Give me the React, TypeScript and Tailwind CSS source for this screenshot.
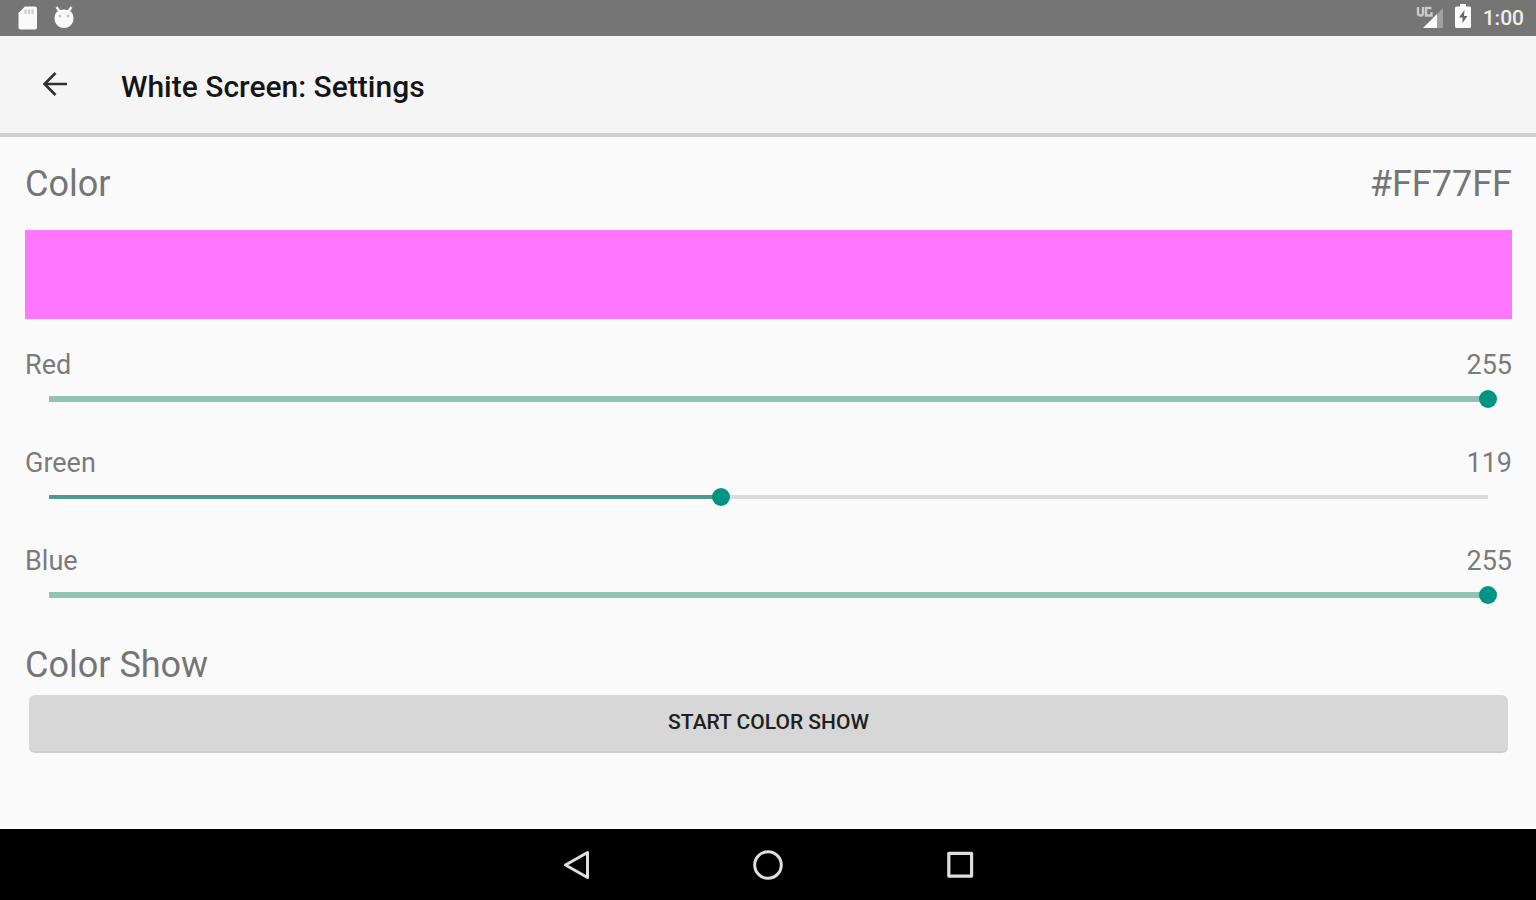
import { useState } from "react";
import clsx from "clsx";

interface ChannelProps {
  id: string;
  label: string;
  value: number;
  onChange: (value: number) => void;
}

function Channel({ id, label, value, onChange }: ChannelProps) {
  const full = value === 255;
  const percent = (value / 255) * 100;
  const fill = full ? "#93c3b5" : "#4f9a8b";

  return (
    <div>
      <div className="flex justify-between text-[27px] leading-8 text-[#7b7b7b]">
        <label htmlFor={id}>{label}</label>
        <output htmlFor={id}>{value}</output>
      </div>
      <div className="px-[15px]">
        <input
          id={id}
          type="range"
          min={0}
          max={255}
          value={value}
          onChange={(e) => onChange(Number(e.target.value))}
          className={clsx(
            "block h-9 w-full cursor-pointer appearance-none bg-center bg-no-repeat outline-none",
            "[&::-webkit-slider-thumb]:size-[18px] [&::-webkit-slider-thumb]:appearance-none [&::-webkit-slider-thumb]:rounded-full [&::-webkit-slider-thumb]:bg-[#009485]",
            full ? "bg-[length:calc(100%-18px)_6px]" : "bg-[length:calc(100%-18px)_4px]"
          )}
          style={{ backgroundImage: `linear-gradient(to right, ${fill} ${percent}%, #dadada ${percent}%)` }}
        />
      </div>
    </div>
  );
}

function StatusBar() {
  return (
    <div className="flex h-9 items-center justify-between bg-[#757575] pl-4 pr-3 text-white">
      <div className="flex items-center gap-3">
        {/* SD card */}
        <svg className="size-6" viewBox="0 0 24 24" aria-hidden="true">
          <path d="M9 .500h10a2 2 0 0 1 2 2v19a2 2 0 0 1-2 2H4.500a2 2 0 0 1-2-2V7z" fill="#fafafa" />
          <path d="M9.500 3.500v4.500M13 3.500v4.500M16.500 3.500v4.500" stroke="#cccccc" strokeWidth="2.200" />
        </svg>
        {/* Debug head */}
        <svg className="size-6" viewBox="0 0 24 24" aria-hidden="true">
          <path d="M4.500 1 8 6M19.500 1 16 6" stroke="#f2f2f2" strokeWidth="2.400" />
          <path d="M12 3.500c6 0 9.500 3 9.500 9 0 5-4 9.500-9.500 9.500s-9.500-4.500-9.500-9.500c0-6 3.500-9 9.500-9z" fill="#fafafa" />
          <circle cx="8" cy="10" r="1.500" fill="#c4c4c4" />
          <circle cx="16" cy="10" r="1.500" fill="#c4c4c4" />
        </svg>
      </div>
      <div className="flex items-center gap-3">
        {/* Signal */}
        <svg className="h-6 w-7" viewBox="0 0 28 24" aria-hidden="true">
          <path d="M28 2v20h-8V10z" fill="#a0a0a0" />
          <path d="M22 8v14H8z" fill="#fafafa" />
          <path d="M3 1v6q0 2.500 2.500 2.500T8 7V1M16.500 2H11v7.500h5.500V6" fill="none" stroke="#c9c9c9" strokeWidth="2.400" />
        </svg>
        {/* Charging battery */}
        <svg className="-mt-1 h-6 w-4" viewBox="0 0 16 24" aria-hidden="true">
          <path d="M5 0h6v2.500h3.500a1.500 1.500 0 0 1 1.500 1.500v18.500a1.500 1.500 0 0 1-1.500 1.500h-13A1.500 1.500 0 0 1 0 22.500V4a1.500 1.500 0 0 1 1.500-1.500H5z" fill="#fafafa" />
          <path d="M9.500 6 4 13.500h3.500V19L12.500 12H9z" fill="#666666" />
        </svg>
        <span className="text-[21px] font-medium leading-9 text-[#eeeeee]">1:00</span>
      </div>
    </div>
  );
}

function NavBar() {
  return (
    <nav className="grid h-[74px] grid-cols-[1fr_192px_192px_192px_1fr] items-center border-t-3 border-white bg-black text-[#dedede]">
      <button type="button" aria-label="Back" className="col-start-2 flex h-full items-center justify-center">
        <svg className="size-8" viewBox="0 0 32 32" fill="none" stroke="currentColor" strokeWidth="3" strokeLinejoin="round">
          <path d="M27.500 3.500v25L5.500 16z" />
        </svg>
      </button>
      <button type="button" aria-label="Home" className="flex h-full items-center justify-center">
        <svg className="size-8" viewBox="0 0 32 32" fill="none" stroke="currentColor" strokeWidth="3">
          <circle cx="16" cy="16" r="13.300" />
        </svg>
      </button>
      <button type="button" aria-label="Overview" className="flex h-full items-center justify-center">
        <svg className="size-8" viewBox="0 0 32 32" fill="none" stroke="currentColor" strokeWidth="3.200" strokeLinejoin="round">
          <path d="M4.800 4.300h22.800v22.800H4.800z" />
        </svg>
      </button>
    </nav>
  );
}

export default function App() {
  const [red, setRed] = useState(255);
  const [green, setGreen] = useState(119);
  const [blue, setBlue] = useState(255);

  const hex = "#" + [red, green, blue].map((c) => c.toString(16).padStart(2, "0")).join("").toUpperCase();

  return (
    <div className="flex min-h-screen flex-col bg-[#fafafa] font-[Roboto,sans-serif]">
      <StatusBar />

      <header className="flex h-[101px] items-center border-b-4 border-[#d0d0d0] bg-[#f5f5f5] pl-10">
        <button type="button" aria-label="Navigate up" className="mr-[51px]">
          <svg className="size-[30px]" viewBox="0 0 30 30" fill="none" stroke="#303030" strokeWidth="2.600">
            <path d="M27 14H5M15.500 3 4.500 14l11 11" />
          </svg>
        </button>
        <h1 className="pt-1 text-[30px] font-medium leading-9 text-[#151515]">White Screen: Settings</h1>
      </header>

      <main className="flex-1 pl-[25px] pr-6 pt-[25px]">
        <div className="flex justify-between text-4xl leading-[44px] text-[#757575]">
          <h2>Color</h2>
          <span>{hex}</span>
        </div>
        <div className="mt-6 h-[89px]" style={{ backgroundColor: hex }} />

        <div className="mt-[30px] flex flex-col gap-[30px]">
          <Channel id="red" label="Red" value={red} onChange={setRed} />
          <Channel id="green" label="Green" value={green} onChange={setGreen} />
          <Channel id="blue" label="Blue" value={blue} onChange={setBlue} />
        </div>

        <h2 className="mt-[30px] text-4xl leading-[44px] text-[#757575]">Color Show</h2>
        <div className="mt-2 px-1">
          <button
            type="button"
            className="h-[58px] w-full rounded-md border-b-2 border-[#cdcecd] bg-[#d6d7d6] text-[21px] font-medium text-[#202020]"
          >
            START COLOR SHOW
          </button>
        </div>
      </main>

      <NavBar />
    </div>
  );
}
